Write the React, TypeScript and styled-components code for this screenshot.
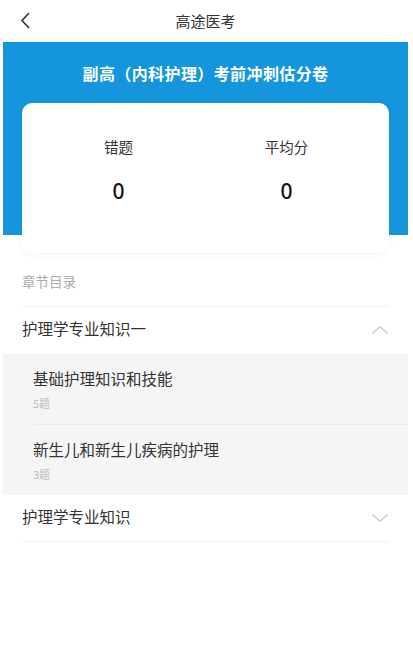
import React from "react";
import styled, { createGlobalStyle } from "styled-components";

const GlobalStyle = createGlobalStyle`
  html, body {
    margin: 0;
    padding: 0;
    background: #fff;
  }
  body {
    font-family: "Noto Sans CJK SC", "Noto Sans", sans-serif;
    color: #333;
  }
`;

const Page = styled.div`
  margin: 0 5px 0 3px;
  min-height: 665px;
  background: #fff;
`;

const NavBar = styled.div`
  position: relative;
  height: 42px;
  display: flex;
  align-items: center;
  justify-content: center;
`;

const BackButton = styled.div`
  position: absolute;
  left: 15px;
  top: 11px;
  width: 20px;
  height: 20px;
  display: flex;
`;

const NavTitle = styled.div`
  font-size: 15px;
  color: #333;
  line-height: 20px;
`;

const Hero = styled.div`
  background: linear-gradient(to bottom, #1596dc 0, #1596dc 193px, #fff 193px);
  padding: 0 19px;
`;

const HeroTitle = styled.div`
  padding: 20px 0 19px;
  line-height: 22px;
  text-align: center;
  color: #fff;
  font-size: 16px;
  font-weight: 700;
  letter-spacing: 0.4px;
`;

const Card = styled.div`
  height: 150px;
  background: #fff;
  border-radius: 10px;
  box-shadow: 0 1px 6px rgba(0, 0, 0, 0.06);
  display: grid;
  grid-template-columns: 168px 168px;
  justify-content: center;
  padding: 33px 6px 0 0;
  box-sizing: border-box;
`;

const Stat = styled.div`
  display: flex;
  flex-direction: column;
  align-items: center;
`;

const StatLabel = styled.div`
  font-size: 14.5px;
  line-height: 22px;
  color: #333;
`;

const StatValue = styled.div`
  margin-top: 20px;
  font-family: "Noto Sans", sans-serif;
  font-size: 21px;
  font-weight: 500;
  line-height: 26px;
  color: #111;
`;

const SectionLabel = styled.div`
  margin: 0 19px;
  padding: 18px 0 15px;
  font-size: 13.5px;
  line-height: 20px;
  color: #aaa;
  border-bottom: 1px solid #f0f0f0;
`;

const ChapterRow = styled.div<{ $divider?: boolean }>`
  margin: 0 19px;
  height: 47px;
  box-sizing: border-box;
  padding-bottom: 5px;
  display: flex;
  align-items: center;
  justify-content: space-between;
  border-bottom: ${(p) => (p.$divider ? "1px solid #f0f0f0" : "none")};
`;

const ChapterTitle = styled.div`
  font-size: 15.5px;
  color: #333;
`;

const ChevronBox = styled.div`
  display: flex;
  padding-top: 4px;
`;

const SubList = styled.div`
  background: #f5f5f5;
`;

const SubItem = styled.div<{ $last?: boolean }>`
  margin-left: 30px;
  padding: 13px 0 13px;
  border-bottom: ${(p) => (p.$last ? "none" : "1px solid #ebebeb")};
`;

const SubTitle = styled.div`
  font-size: 15.5px;
  line-height: 22px;
  color: #333;
`;

const SubCount = styled.div`
  margin-top: 6px;
  font-size: 11px;
  line-height: 16px;
  color: #bbb;
`;

const Chevron = ({ up }: { up?: boolean }) => (
  <ChevronBox>
    <svg width="18" height="10" viewBox="0 0 18 10">
      <polyline
        points={up ? "1.5,8.5 9,1.5 16.5,8.5" : "1.5,1.5 9,8.5 16.5,1.5"}
        fill="none"
        stroke="#c8c8c8"
        strokeWidth="1.2"
      />
    </svg>
  </ChevronBox>
);

const subs = [
  { title: "基础护理知识和技能", count: 5 },
  { title: "新生儿和新生儿疾病的护理", count: 3 },
];

export default function App() {
  return (
    <>
      <GlobalStyle />
      <Page>
        <NavBar>
          <BackButton>
            <svg width="20" height="20" viewBox="0 0 20 20">
              <polyline points="11,2 4,9.5 11,17" fill="none" stroke="#333" strokeWidth="1.6" />
            </svg>
          </BackButton>
          <NavTitle>高途医考</NavTitle>
        </NavBar>
        <Hero>
          <HeroTitle>副高（内科护理）考前冲刺估分卷</HeroTitle>
          <Card>
            <Stat>
              <StatLabel>错题</StatLabel>
              <StatValue>0</StatValue>
            </Stat>
            <Stat>
              <StatLabel>平均分</StatLabel>
              <StatValue>0</StatValue>
            </Stat>
          </Card>
        </Hero>
        <SectionLabel>章节目录</SectionLabel>
        <ChapterRow>
          <ChapterTitle>护理学专业知识一</ChapterTitle>
          <Chevron up />
        </ChapterRow>
        <SubList>
          {subs.map((s, i) => (
            <SubItem key={s.title} $last={i === subs.length - 1}>
              <SubTitle>{s.title}</SubTitle>
              <SubCount>{s.count}题</SubCount>
            </SubItem>
          ))}
        </SubList>
        <ChapterRow $divider>
          <ChapterTitle>护理学专业知识</ChapterTitle>
          <Chevron />
        </ChapterRow>
      </Page>
    </>
  );
}
